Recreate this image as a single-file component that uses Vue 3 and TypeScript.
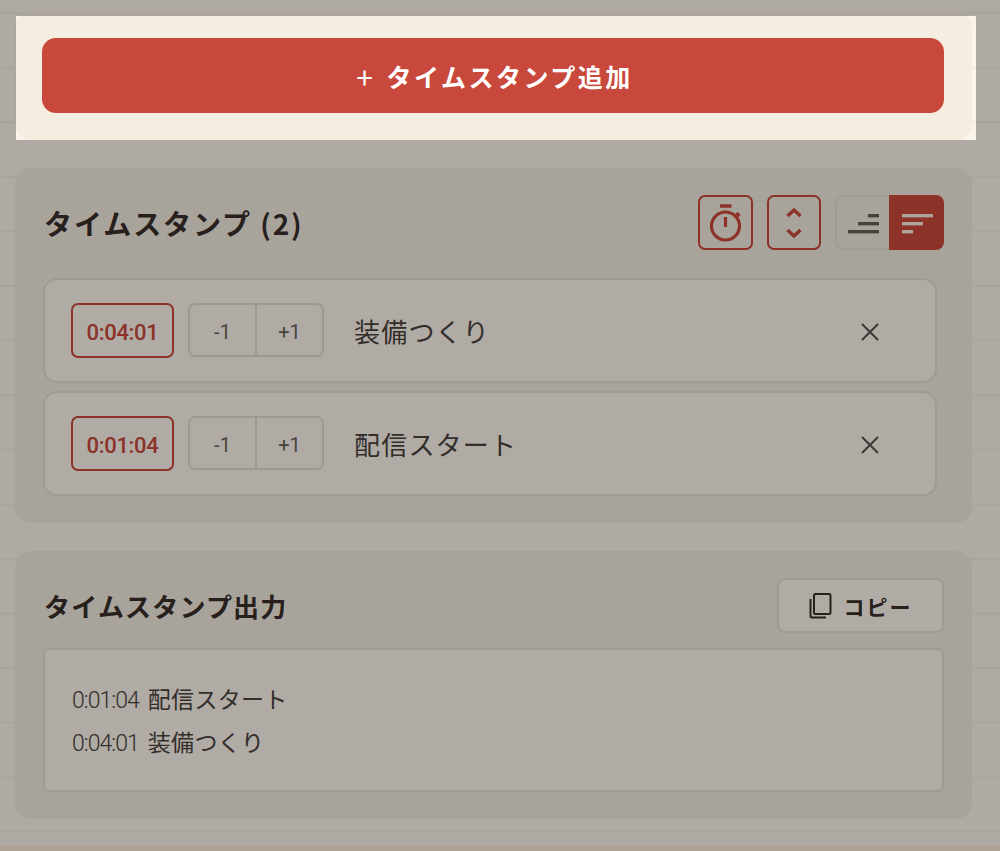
<script setup lang="ts">
interface Stamp {
  time: string
  label: string
}

const stamps: Stamp[] = [
  { time: '0:04:01', label: '装備つくり' },
  { time: '0:01:04', label: '配信スタート' },
]

const outputLines: Stamp[] = [stamps[1], stamps[0]]
</script>

<template>
  <div class="page">
    <main class="stack">
      <section class="card lit">
        <button class="add-btn"><span class="plus">+</span>タイムスタンプ追加</button>
      </section>

      <section class="card">
        <header class="card-head">
          <h2 class="title">タイムスタンプ (2)</h2>
          <div class="tools">
            <button class="tool-btn" aria-label="timer">
              <svg width="36" height="40" viewBox="0 0 36 40" fill="none" stroke="currentColor" stroke-width="3.2">
                <path d="M12 3h11.500" stroke-width="3.5" />
                <circle cx="17.500" cy="23" r="14" />
                <path d="M17.500 14v10" />
                <path d="M28.500 10l3 3" />
              </svg>
            </button>
            <button class="tool-btn" aria-label="expand">
              <svg width="18" height="32" viewBox="0 0 18 32" fill="none" stroke="currentColor" stroke-width="3.4">
                <path d="M2.500 9L9 3l6.500 6" />
                <path d="M2.500 23L9 29l6.500-6" />
              </svg>
            </button>
            <div class="toggle">
              <button class="toggle-btn" aria-label="descending">
                <svg width="32" height="22" viewBox="0 0 32 22" fill="currentColor">
                  <rect x="21" y="2" width="11" height="3.400" />
                  <rect x="11" y="10" width="21" height="3.400" />
                  <rect x="1" y="18" width="31" height="3.400" />
                </svg>
              </button>
              <button class="toggle-btn active" aria-label="ascending">
                <svg width="32" height="22" viewBox="0 0 32 22" fill="currentColor">
                  <rect x="1" y="2" width="31" height="3.400" />
                  <rect x="1" y="10" width="21" height="3.400" />
                  <rect x="1" y="18" width="11" height="3.400" />
                </svg>
              </button>
            </div>
          </div>
        </header>

        <ul class="rows">
          <li v-for="stamp in stamps" :key="stamp.time" class="row">
            <button class="time-btn">{{ stamp.time }}</button>
            <div class="adjust">
              <button class="adjust-btn">-1</button>
              <button class="adjust-btn">+1</button>
            </div>
            <span class="label">{{ stamp.label }}</span>
            <button class="remove" aria-label="remove">
              <svg width="20" height="20" viewBox="0 0 20 20" fill="none" stroke="currentColor" stroke-width="2">
                <path d="M2 2l16 16M18 2L2 18" />
              </svg>
            </button>
          </li>
        </ul>
      </section>

      <section class="card">
        <header class="card-head output-head">
          <h2 class="title small">タイムスタンプ出力</h2>
          <button class="copy-btn">
            <svg width="24" height="26" viewBox="0 0 24 26" fill="none" stroke="currentColor" stroke-width="2">
              <rect x="5" y="1" width="16.500" height="20" rx="1.500" />
              <path d="M1.500 6v17a1.500 1.500 0 0 0 1.500 1.500H17" />
            </svg>
            <span>コピー</span>
          </button>
        </header>
        <div class="output">
          <p v-for="line in outputLines" :key="line.time">
            <span class="out-time">{{ line.time }}</span>
            <span class="out-label">{{ line.label }}</span>
          </p>
        </div>
      </section>
    </main>
    <footer class="foot"></footer>
    <div class="spotlight"></div>
  </div>
</template>

<style>
html,
body {
  margin: 0;
  background: #fbf4ea;
}
</style>

<style scoped>
.page {
  position: relative;
  height: 851px;
  overflow: hidden;
  display: flex;
  flex-direction: column;
  font-family: "Noto Sans CJK JP", "Noto Sans", sans-serif;
  color: #3a322c;
  background-color: #fbf4ea;
  background-image: linear-gradient(#f3ece2 2px, transparent 2px);
  background-size: 100% 54.6px;
  background-position: 0 12px;
}

.stack {
  flex: 1;
  display: flex;
  flex-direction: column;
  gap: 28px;
  width: 957px;
  margin-left: 15px;
  padding-top: 11px;
}

.card {
  background: #f2ebdf;
  border-radius: 16px;
  padding: 27px 28px 27px 27px;
  box-sizing: border-box;
}

.card.lit {
  background: #f5ede0;
}

.foot {
  height: 5px;
  background: #fbebd4;
}

button {
  font-family: inherit;
  cursor: pointer;
  padding: 0;
  margin: 0;
  box-sizing: border-box;
}

.add-btn {
  display: flex;
  align-items: center;
  justify-content: center;
  width: 100%;
  height: 75px;
  padding-left: 3px;
  border: 0;
  border-radius: 14px;
  background: #c9483c;
  color: #fff;
  font-size: 25px;
  font-weight: 700;
  letter-spacing: 2.5px;
}

.plus {
  font-size: 30px;
  font-weight: 400;
  line-height: 1;
  margin-right: 11px;
}

.card-head {
  display: flex;
  justify-content: space-between;
  align-items: center;
  height: 55px;
  margin-bottom: 28px;
}

.title {
  margin: 0 0 0 2px;
  font-size: 28px;
  font-weight: 700;
  letter-spacing: 1.9px;
  color: #382e29;
}

.title.small {
  font-size: 26px;
  letter-spacing: 1.2px;
}

.tools {
  display: flex;
  gap: 14px;
}

.tool-btn {
  width: 55px;
  height: 55px;
  display: flex;
  align-items: center;
  justify-content: center;
  background: transparent;
  border: 2px solid #c9483c;
  border-radius: 7px;
  color: #c9483c;
}

.tool-btn + .tool-btn {
  width: 54px;
}

.toggle {
  display: flex;
  width: 109px;
  height: 55px;
  border-radius: 8px;
  overflow: hidden;
}

.toggle-btn {
  flex: 0 0 54px;
  display: flex;
  align-items: center;
  justify-content: center;
  background: transparent;
  border: 2px solid #e8e0d3;
  border-right: 0;
  border-radius: 8px 0 0 8px;
  color: #675f58;
}

.toggle-btn.active {
  flex: 0 0 55px;
  background: #c9483c;
  border: 0;
  border-radius: 0;
  color: #f5ede0;
}

.rows {
  list-style: none;
  margin: 0 7px 0 1px;
  padding: 0;
  display: flex;
  flex-direction: column;
  gap: 8px;
}

.row {
  height: 105px;
  box-sizing: border-box;
  display: flex;
  align-items: center;
  padding: 0 55px 0 26px;
  background: #fcf5ec;
  border: 2px solid #e6dfd2;
  border-radius: 14px;
}

.time-btn {
  width: 103px;
  height: 55px;
  padding-top: 3px;
  border: 2px solid #c9483c;
  border-radius: 7px;
  background: transparent;
  color: #c9483c;
  font-family: Roboto, "Noto Sans", sans-serif;
  font-size: 22px;
  font-weight: 500;
  letter-spacing: -0.3px;
}

.adjust {
  display: flex;
  width: 136px;
  height: 54px;
  margin-left: 14px;
  margin-bottom: 2px;
  border: 2px solid #e2dbcf;
  border-radius: 7px;
  box-sizing: border-box;
}

.adjust-btn {
  flex: 1;
  padding-top: 4px;
  border: 0;
  background: transparent;
  color: #6a625b;
  font-family: Roboto, "Noto Sans", sans-serif;
  font-size: 20px;
}

.adjust-btn + .adjust-btn {
  border-left: 2px solid #e2dbcf;
}

.label {
  flex: 1;
  margin-left: 30px;
  font-size: 26px;
  letter-spacing: 1.2px;
  font-weight: 400;
  color: #4a423c;
}

.remove {
  display: flex;
  margin-top: 3px;
  border: 0;
  background: transparent;
  color: #5a524c;
}

.output-head {
  margin-bottom: 15px;
}

.copy-btn {
  width: 167px;
  height: 55px;
  display: flex;
  align-items: center;
  justify-content: center;
  gap: 11px;
  background: #fcf5ec;
  border: 2px solid #e6dfd2;
  border-radius: 8px;
  color: #382e29;
  font-size: 21px;
  font-weight: 700;
  letter-spacing: 2px;
}

.output {
  height: 144px;
  box-sizing: border-box;
  margin-left: 1px;
  padding: 27px 27px;
  background: #fcf5ec;
  border: 2px solid #e6dfd2;
  border-radius: 6px;
  color: #4a423c;
}

.output p {
  margin: 0;
  height: 43px;
  line-height: 43px;
  display: flex;
  align-items: baseline;
  gap: 9px;
}

.out-time {
  font-family: Roboto, "Noto Sans", sans-serif;
  font-size: 23px;
  font-weight: 300;
  letter-spacing: -0.95px;
}

.out-label {
  font-size: 23px;
  letter-spacing: 0.3px;
}

/* tutorial spotlight: the dim layer is the shadow around the hole */
.spotlight {
  position: absolute;
  left: 16px;
  top: 16px;
  width: 960px;
  height: 124px;
  box-shadow: 0 0 0 1200px rgba(0, 0, 0, 0.3);
  pointer-events: none;
}
</style>
